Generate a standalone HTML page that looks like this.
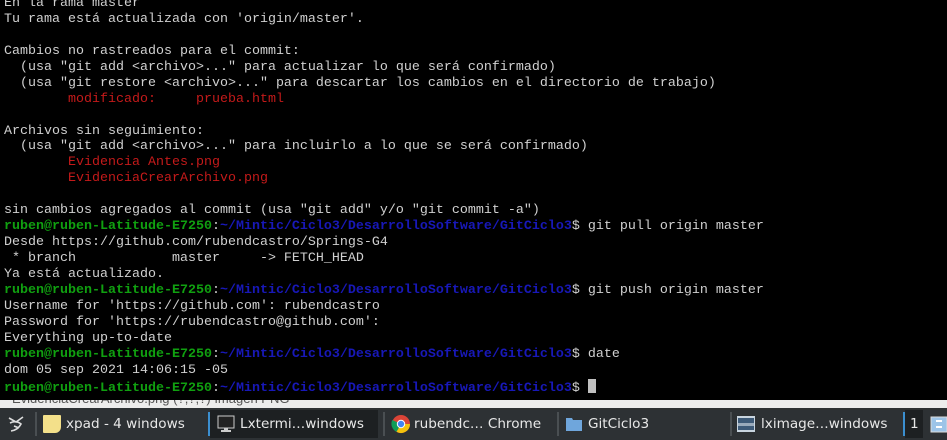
<!DOCTYPE html>
<html><head><meta charset="utf-8"><style>
html,body{margin:0;padding:0;width:947px;height:440px;overflow:hidden;background:#000}
#term{position:absolute;left:0;top:0;width:947px;height:400px;background:#000;overflow:hidden}
pre{position:absolute;left:4px;top:-4px;margin:0;font-family:"Liberation Mono",monospace;font-size:13.33px;line-height:15.94px;color:#d0d0d0;white-space:pre}
.g{color:#10a010;font-weight:bold}.b{color:#1818b8;font-weight:bold}.r{color:#c41a1a}
.cur{display:inline-block;width:8px;height:14px;background:#c0c0c0;vertical-align:-2px}
#band{position:absolute;left:0;top:400px;width:947px;height:8px;background:#ececec;overflow:hidden}
#band span{position:absolute;left:12px;top:-9px;font-family:"Liberation Sans",sans-serif;font-size:13px;color:#555}
#bar{position:absolute;left:0;top:408px;width:947px;height:32px;background:#2d3134;font-family:"DejaVu Sans","Liberation Sans",sans-serif;font-size:13.6px;color:#e8e8e8}
.it{position:absolute;top:0;height:32px;line-height:32px;white-space:nowrap}
.sep{position:absolute;top:4px;width:2px;height:24px;background:#4a4f52}
.ic{position:absolute;top:7px;width:18px;height:18px}
</style></head><body>
<div id="term"><pre>En la rama master
Tu rama está actualizada con 'origin/master'.

Cambios no rastreados para el commit:
  (usa "git add &lt;archivo&gt;..." para actualizar lo que será confirmado)
  (usa "git restore &lt;archivo&gt;..." para descartar los cambios en el directorio de trabajo)
        <span class="r">modificado:     prueba.html</span>

Archivos sin seguimiento:
  (usa "git add &lt;archivo&gt;..." para incluirlo a lo que se será confirmado)
        <span class="r">Evidencia Antes.png</span>
        <span class="r">EvidenciaCrearArchivo.png</span>

sin cambios agregados al commit (usa "git add" y/o "git commit -a")
<span class="g">ruben@ruben-Latitude-E7250</span>:<span class="b">~/Mintic/Ciclo3/DesarrolloSoftware/GitCiclo3</span>$ git pull origin master
Desde https://github.com/rubendcastro/Springs-G4
 * branch            master     -&gt; FETCH_HEAD
Ya está actualizado.
<span class="g">ruben@ruben-Latitude-E7250</span>:<span class="b">~/Mintic/Ciclo3/DesarrolloSoftware/GitCiclo3</span>$ git push origin master
Username for 'https://github.com': rubendcastro
Password for 'https://rubendcastro@github.com':
Everything up-to-date
<span class="g">ruben@ruben-Latitude-E7250</span>:<span class="b">~/Mintic/Ciclo3/DesarrolloSoftware/GitCiclo3</span>$ date
dom 05 sep 2021 14:06:15 -05
<span class="g">ruben@ruben-Latitude-E7250</span>:<span class="b">~/Mintic/Ciclo3/DesarrolloSoftware/GitCiclo3</span>$ <span class="cur"></span></pre></div>
<div id="band"><span>EvidenciaCrearArchivo.png (?,?,?) Imagen PNG</span></div>
<div id="bar">
<svg class="ic" style="left:6px;width:20px;height:20px;top:6px" viewBox="0 0 20 20"><path d="M3 4 L10 8 L17 3 M4 9 Q10 6 15 10 Q12 16 5 17 M8 12 L13 14" stroke="#ddd" stroke-width="1.6" fill="none"/></svg>
<div class="sep" style="left:35px"></div>
<div class="ic" style="left:43px;background:#f3e08a;border-radius:1px 1px 6px 1px"></div>
<div class="it" style="left:66px">xpad - 4 windows</div>
<div class="sep" style="left:208px;background:#3b8fd0"></div>
<div style="position:absolute;left:210px;top:2px;width:168px;height:28px;background:#1d2022"></div>
<svg class="ic" style="left:217px" viewBox="0 0 18 18"><rect x="1" y="1" width="16" height="12" fill="#222" stroke="#ccc"/><rect x="7" y="13" width="4" height="2" fill="#ccc"/><rect x="4" y="15" width="10" height="2" fill="#ccc"/></svg>
<div class="it" style="left:240px">Lxtermi…windows</div>
<div class="sep" style="left:383px"></div>
<svg class="ic" style="left:391px;width:20px;height:20px;top:6px" viewBox="0 0 20 20"><circle cx="10" cy="10" r="9" fill="#db4437"/><path d="M10 10 L19 10 A9 9 0 0 1 5.5 17.8Z" fill="#f4c20d"/><path d="M10 10 L5.5 17.8 A9 9 0 0 1 1.2 6Z" fill="#0f9d58"/><circle cx="10" cy="10" r="4.2" fill="#fff"/><circle cx="10" cy="10" r="3.2" fill="#4285f4"/></svg>
<div class="it" style="left:414px">rubendc… Chrome</div>
<div class="sep" style="left:557px"></div>
<svg class="ic" style="left:565px" viewBox="0 0 18 18"><path d="M1 3 H7 L8 5 H17 V16 H1Z" fill="#6fa6dc"/></svg>
<div class="it" style="left:588px">GitCiclo3</div>
<div class="sep" style="left:730px"></div>
<svg class="ic" style="left:737px" viewBox="0 0 18 18"><rect x="0" y="1" width="18" height="16" fill="#c8d4df"/><rect x="1" y="3" width="16" height="12" fill="#3d5a78"/><rect x="1" y="8" width="16" height="3" fill="#9ab"/></svg>
<div class="it" style="left:761px">lximage…windows</div>
<div class="sep" style="left:903px;background:#3b8fd0"></div>
<div style="position:absolute;left:905px;top:2px;width:18px;height:28px;background:#1d2022"></div>
<div class="it" style="left:910px">1</div>
<svg class="ic" style="left:930px" viewBox="0 0 18 18"><rect x="1" y="2" width="16" height="15" fill="#9cc4e8" stroke="#ddd"/><rect x="6" y="5" width="6" height="2" fill="#fff"/><rect x="6" y="11" width="6" height="2" fill="#fff"/></svg>
</div>
</body></html>
